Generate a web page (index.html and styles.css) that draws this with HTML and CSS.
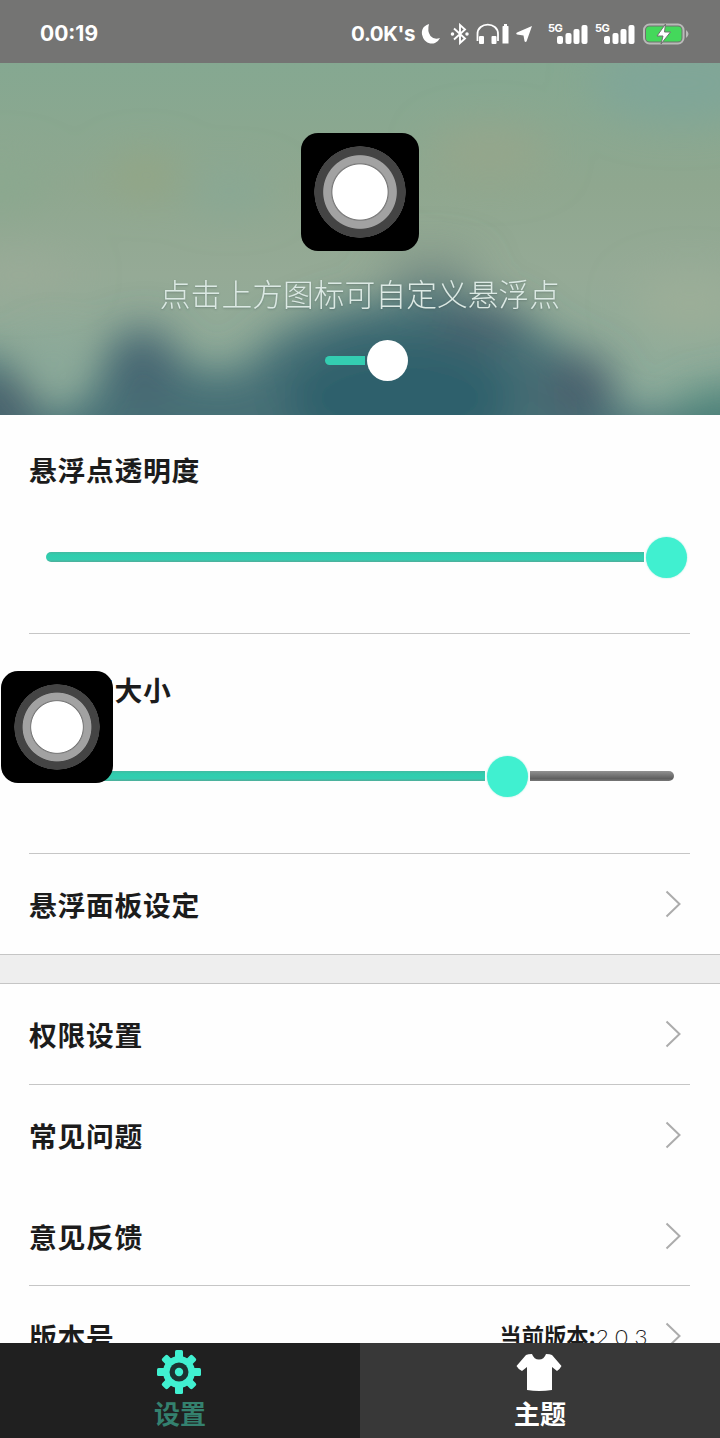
FILE: index.html
```html
<!DOCTYPE html>
<html lang="zh-CN">
<head>
<meta charset="utf-8">
<meta name="viewport" content="width=device-width">
<title>悬浮点设置</title>
<link rel="stylesheet" href="styles.css">
</head>
<body>
<div class="screen">
  <header class="status">
    <span class="clock">00:19</span>
    <div class="status-right">
      <span class="speed">0.0K's</span>
      <svg class="moon" width="20" height="22" viewBox="0 0 20 22"><path d="M8 1C1 3 0 9 1.500 13C3 19 9 22 14 20Q17 19 19 15Q13 17 9.500 13Q6 8 8 1Z" fill="#fff"/></svg>
      <svg class="bluetooth" width="20" height="22" viewBox="0 0 20 22" fill="none" stroke="#fff" stroke-width="1.900"><path d="M4 5.500L15 15.500L10 20V2L15 6.500L4 16.500"/><circle cx="2.500" cy="11" r=".8" fill="#fff"/><circle cx="17" cy="11" r=".8" fill="#fff"/></svg>
      <svg class="headset" width="34" height="22" viewBox="0 0 34 22"><path d="M1.500 18V11C1.500 -1.500 22 -1.500 22 11V18" fill="none" stroke="#fff" stroke-width="1.800"/><rect x="3" y="13" width="5" height="8" rx="1" fill="#fff"/><rect x="15.500" y="13" width="5" height="8" rx="1" fill="#fff"/><path d="M26.500 4V3.500Q26.500 3 27.200 3H28V1H31V3H32Q32.500 3 32.500 3.500V20.500H26.500Z" fill="#fff"/></svg>
      <svg class="arrow" width="17" height="18" viewBox="0 0 17 18"><path d="M16 1L10.500 16.500Q9 17.500 8.500 16L7.500 10.500L1 9.500Q-.5 8.500 1 7.500Z" fill="#fff"/></svg>
      <div class="signal"><span>5G</span><svg width="42" height="22" viewBox="0 0 42 22" fill="#fff"><rect x="9" y="13" width="6" height="8" rx="2"/><rect x="17.500" y="10" width="6" height="11" rx="2"/><rect x="25.500" y="6" width="6" height="15" rx="2"/><rect x="33.500" y="2" width="6" height="19" rx="2"/></svg></div>
      <div class="signal second"><span>5G</span><svg width="42" height="22" viewBox="0 0 42 22" fill="#fff"><rect x="9" y="13" width="6" height="8" rx="2"/><rect x="17.500" y="10" width="6" height="11" rx="2"/><rect x="25.500" y="6" width="6" height="15" rx="2"/><rect x="33.500" y="2" width="6" height="19" rx="2"/></svg></div>
      <svg class="battery" width="47" height="22" viewBox="0 0 47 22"><rect x="1" y="1.500" width="39.500" height="19" rx="5.500" fill="#6f706e" stroke="#b9bab8" stroke-width="2"/><rect x="3" y="3.500" width="35.500" height="15" rx="3.500" fill="#44d85b"/><path d="M43 7Q48 11 43 15Z" fill="#b9bab8"/><path d="M22.500 1L14 13H20L18 21L27.500 9H21.500Z" fill="#fff" stroke="#6f706e" stroke-width="1"/></svg>
    </div>
  </header>

  <section class="hero">
    <svg class="backdrop" width="720" height="352" viewBox="0 0 720 352" preserveAspectRatio="none">
      <defs>
        <linearGradient id="sky" x1="0" y1="0" x2="0" y2="1"><stop offset="0" stop-color="#85a891"/><stop offset=".35" stop-color="#8fa78f"/><stop offset=".6" stop-color="#95aa96"/><stop offset="1" stop-color="#8cad9c"/></linearGradient>
        <filter id="soft" x="-50%" y="-50%" width="200%" height="200%"><feGaussianBlur stdDeviation="20"/></filter>
        <filter id="wide" x="-60%" y="-60%" width="220%" height="220%"><feGaussianBlur stdDeviation="20"/></filter>
      </defs>
      <rect width="720" height="352" fill="url(#sky)"/>
      <g filter="url(#wide)">
        <ellipse cx="680" cy="20" rx="90" ry="40" fill="#80a698"/>
        <ellipse cx="145" cy="112" rx="38" ry="20" fill="#93a584"/>
        <ellipse cx="230" cy="128" rx="45" ry="18" fill="#87a895"/>
        <ellipse cx="490" cy="90" rx="60" ry="26" fill="#95a68b"/>
        <ellipse cx="20" cy="212" rx="60" ry="16" fill="#9bab98"/>
        <ellipse cx="690" cy="240" rx="60" ry="30" fill="#9cae98"/>
        <ellipse cx="0" cy="120" rx="50" ry="26" fill="#8aa88f"/>
      </g>
      <g filter="url(#soft)">
        <path d="M-60 420V300L0 292L50 355L90 335L112 275L150 262L190 305L235 310L280 270L330 248L385 235L435 222L480 235L530 262L590 300L625 352L690 350L760 310V420Z" fill="#467076"/>
        <ellipse cx="430" cy="205" rx="50" ry="16" fill="#73897f" opacity=".65"/>
        <ellipse cx="145" cy="305" rx="32" ry="40" fill="#466672"/>
        <ellipse cx="480" cy="262" rx="48" ry="22" fill="#4a646e"/>
        <ellipse cx="578" cy="325" rx="36" ry="34" fill="#49616d"/>
        <ellipse cx="400" cy="335" rx="115" ry="62" fill="#2d606c"/>
        <ellipse cx="0" cy="345" rx="35" ry="30" fill="#49616c"/>
        <ellipse cx="55" cy="295" rx="28" ry="22" fill="#86a599" opacity=".6"/>
        <ellipse cx="715" cy="350" rx="40" ry="24" fill="#4e8379"/>
      </g>
    </svg>
    <div class="dot"><i></i></div>
    <p class="hint">点击上方图标可自定义悬浮点</p>
    <div class="switch"><b></b><i></i></div>
  </section>

  <main class="content">
    <section class="setting">
      <h2>悬浮点透明度</h2>
      <div class="slider full"><b></b><i></i><u></u></div>
    </section>
    <section class="setting size">
      <h2>悬浮点大小</h2>
      <div class="slider partial"><b></b><i></i><u></u></div>
    </section>
    <div class="row panel"><h2>悬浮面板设定</h2><svg class="chevron" width="16" height="28" viewBox="0 0 16 28"><path d="M1.500 1.500L14.500 14L1.500 26.500"/></svg></div>
    <div class="band"></div>
    <div class="row lined"><h2>权限设置</h2><svg class="chevron" width="16" height="28" viewBox="0 0 16 28"><path d="M1.500 1.500L14.500 14L1.500 26.500"/></svg></div>
    <div class="row"><h2>常见问题</h2><svg class="chevron" width="16" height="28" viewBox="0 0 16 28"><path d="M1.500 1.500L14.500 14L1.500 26.500"/></svg></div>
    <div class="row lined feedback"><h2>意见反馈</h2><svg class="chevron" width="16" height="28" viewBox="0 0 16 28"><path d="M1.500 1.500L14.500 14L1.500 26.500"/></svg></div>
    <div class="row"><h2>版本号</h2><p class="version"><strong>当前版本:</strong><span>2.0.3</span></p><svg class="chevron" width="16" height="28" viewBox="0 0 16 28"><path d="M1.500 1.500L14.500 14L1.500 26.500"/></svg></div>
  </main>

  <nav class="tabs">
    <div class="tab active">
      <svg width="44" height="44" viewBox="-22 -22 44 44"><g fill="#40f0d0"><circle r="16"/><rect x="-4" y="-22" width="8" height="44" rx="1.500"/><rect x="-22" y="-4" width="44" height="8" rx="1.500"/><g transform="rotate(45)"><rect x="-4" y="-21.500" width="8" height="43" rx="2"/><rect x="-21.500" y="-4" width="43" height="8" rx="2"/></g></g><circle r="9.500" fill="#1c3331"/><circle r="4.200" fill="#40f0d0"/></svg>
      <span>设置</span>
    </div>
    <div class="tab">
      <svg width="46" height="44" viewBox="0 0 46 44"><path d="M10 5Q12 4 16 4Q18 9.500 23 9.500Q28 9.500 30 4Q34 4 36 5L45.500 16Q44 19 41 21L36 17V40Q23 42 11 40V17L6 21Q2 19 .500 16Z" fill="#fff"/></svg>
      <span>主题</span>
    </div>
  </nav>
  <div class="dot floating"><i></i></div>
</div>
</body>
</html>
```
FILE: styles.css
```css
* { box-sizing: border-box; }
body { margin: 0; font-family: "Noto Sans CJK SC", sans-serif; color: #1c1c1c; background: #fff; }
h2, p { margin: 0; }
svg { display: block; flex: none; }
.screen { position: relative; display: flex; flex-direction: column; width: 720px; height: 1438px; overflow: hidden; background: #fefefe; }

.status { flex: none; display: flex; justify-content: space-between; align-items: center; height: 63px; padding: 4px 30px 0 40px; background: #747473; color: #fff; font: 700 21.5px/24px "Inter", sans-serif; }
.status-right { display: flex; align-items: center; }
.clock { font-size: 21px; }
.speed { font-size: 20.5px; letter-spacing: -.4px; }
.moon { margin-left: 6px; }
.bluetooth { margin-left: 9px; }
.headset { margin-left: 6px; }
.arrow { margin-left: 6px; }
.signal { position: relative; margin-left: 15px; }
.signal.second { margin-left: 5px; }
.signal span { position: absolute; left: 0; top: 0; font-size: 11px; line-height: 11px; letter-spacing: -.5px; }
.battery { margin-left: 6px; }

.hero { position: relative; flex: none; display: flex; flex-direction: column; align-items: center; height: 352px; padding-top: 70px; overflow: hidden; }
.backdrop { position: absolute; left: 0; top: 0; }
.dot { position: relative; display: grid; place-items: center; width: 118px; height: 118px; border-radius: 17px; background: #000; }
.dot i { width: 92px; height: 92px; border-radius: 50%; background: radial-gradient(circle closest-side, #fff 59%, #777 61%, #a2a2a2 64%, #a2a2a2 79%, #444 81%, #444 99%, #000 100%); }
.hint { position: relative; margin-top: 19px; font-size: 30.8px; line-height: 46px; font-weight: 300; color: #dce9e4; text-shadow: 0 1px 2px rgba(60, 80, 80, .35); white-space: nowrap; }
.switch { position: relative; display: flex; align-items: center; gap: 2px; height: 42px; margin-top: 23px; margin-left: 13px; }
.switch b { width: 40px; height: 9px; border-radius: 5px 0 0 5px; background: #34cdb1; }
.switch i { width: 41px; height: 41px; border-radius: 50%; background: #fff; }

.content { flex: 1; min-height: 0; overflow: hidden; }
h2 { font-size: 27.8px; line-height: 42px; letter-spacing: .7px; font-weight: 700; white-space: nowrap; }
.setting { height: 219px; margin: 0 30px 0 29px; padding-top: 33px; border-bottom: 1px solid #c6c6c6; }
.setting.size { height: 220px; padding-top: 34px; }
.slider { display: flex; align-items: center; height: 42px; margin: 46px 3px 0 17px; }
.size .slider { margin-top: 45px; }
.slider b { flex: none; height: 10px; border-radius: 5px 0 0 5px; background: linear-gradient(#43baa2, #2fceae 30%, #34cdb0 75%, #50ac99); }
.slider i { flex: none; width: 41px; height: 41px; margin: 0 2px; border-radius: 50%; background: #40f0d0; box-shadow: 0 0 2px #a0eadc; }
.slider u { flex: none; height: 10px; border-radius: 0 5px 5px 0; background: linear-gradient(#919191, #606060 75%, #777); }
.full b { width: 598px; }
.partial b { width: 439px; }
.partial u { width: 144px; }
.row { display: flex; align-items: center; height: 101px; margin: 0 30px 0 29px; padding: 0 9px 0 0; border-bottom: 1px solid transparent; }
.row h2 { flex: 1; }
.row.lined { border-color: #c6c6c6; }
.row.panel, .row.feedback { height: 100px; }
.chevron path { fill: none; stroke: #acacac; stroke-width: 2; }
.band { height: 30px; border: 1px solid #c5c5c5; border-width: 1px 0; background: #eee; }
.version { display: flex; align-items: baseline; margin-right: 17px; font-size: 22.3px; line-height: 34px; }
.version strong { font-weight: 700; }
.version span { font-family: "Lato", sans-serif; font-weight: 300; letter-spacing: .6px; }

.tabs { flex: none; display: grid; grid-template-columns: 1fr 1fr; height: 95px; }
.tab { display: flex; flex-direction: column; align-items: center; padding-top: 7px; background: #383838; color: #fff; font-size: 26px; line-height: 38px; font-weight: 700; }
.tab svg { margin-right: 2px; }
.tab.active { background: #202020; color: #34816f; }
.floating { position: absolute; left: 1px; top: 671px; width: 112px; height: 112px; }
.floating i { width: 86px; height: 86px; }
```
